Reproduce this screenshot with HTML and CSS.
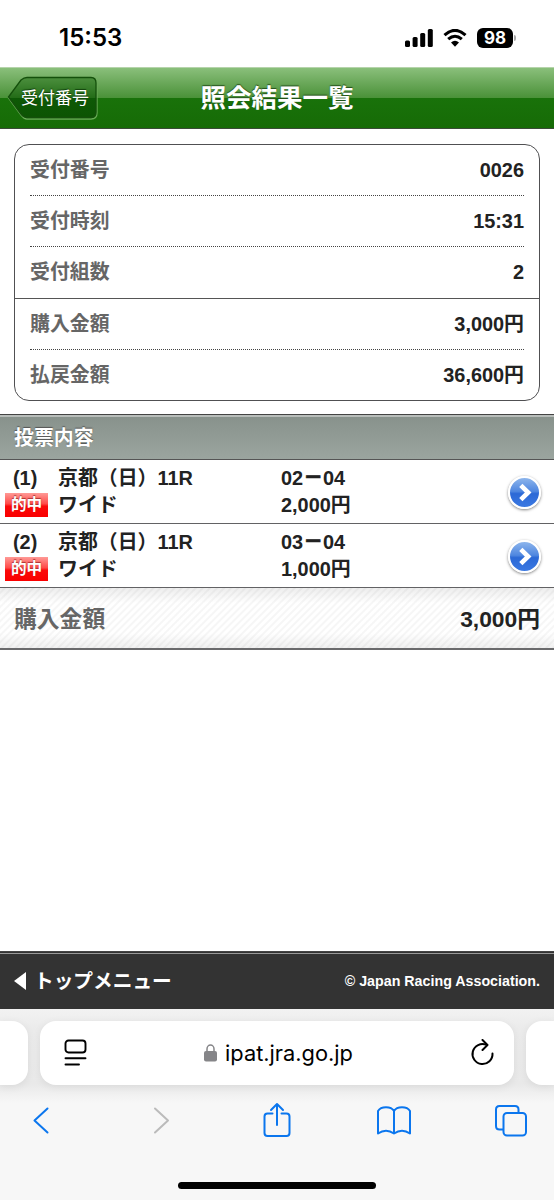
FILE: index.html
```html
<!DOCTYPE html>
<html lang="ja">
<head>
<meta charset="utf-8">
<title>照会結果一覧</title>
<link rel="stylesheet" href="styles.css">
</head>
<body>
<div class="status">
  <span class="time">15:53</span>
  <div class="indicators">
    <svg class="signal" width="28" height="18" viewBox="0 0 28 18"><rect x="0" y="11.5" width="5" height="6.5" rx="1.5"/><rect x="7.6" y="8" width="5" height="10" rx="1.5"/><rect x="15.2" y="4" width="5" height="14" rx="1.5"/><rect x="22.8" y="0" width="5" height="18" rx="1.5"/></svg>
    <svg class="wifi" width="24" height="18" viewBox="0 0 24 18"><path d="M1.5 6.2 Q12-3.4 22.5 6.2M5.2 10.2 Q12 4.3 18.8 10.2" fill="none" stroke="#000" stroke-width="3.1"/><path d="M8 13.4 Q12 10.3 16 13.4 L12 17.7Z"/></svg>
    <span class="battery">98</span><span class="battery-tip"></span>
  </div>
</div>
<header class="header">
  <a class="back">
    <svg class="back-shape" width="92" height="46" viewBox="0 0 92 46">
      <defs><linearGradient id="bg" x1="0" y1="0" x2="0" y2="1"><stop offset="0" stop-color="#4c8f3e"/><stop offset=".5" stop-color="#246d18"/><stop offset=".51" stop-color="#0e5906"/><stop offset="1" stop-color="#0c5403"/></linearGradient></defs>
      <path d="M1.5 22 L14 5 Q17 2.5 20 2.5 H84 Q90 2.5 90 8.5 V37 Q90 43 84 43 H20 Q17 43 14 39Z" fill="none" stroke="#6aab58" stroke-width="1.3"/>
      <path d="M1.5 21 L14 4 Q17 1.5 20 1.5 H84 Q89 1.5 89 7 V36 Q89 41.5 84 41.5 H20 Q17 41.5 14 38Z" fill="url(#bg)" stroke="#14500b" stroke-width="1.3"/>
    </svg>
    <span class="back-label">受付番号</span>
  </a>
  <h1 class="title">照会結果一覧</h1>
</header>
<main class="main">
  <dl class="card">
    <div class="row"><dt>受付番号</dt><dd>0026</dd></div>
    <div class="row"><dt>受付時刻</dt><dd>15:31</dd></div>
    <div class="row last"><dt>受付組数</dt><dd>2</dd></div>
    <div class="row split"><dt>購入金額</dt><dd>3,000円</dd></div>
    <div class="row last"><dt>払戻金額</dt><dd>36,600円</dd></div>
  </dl>
  <h2 class="section">投票内容</h2>
  <div class="bet">
    <div class="mark"><span class="num">(1)</span><span class="hit">的中</span></div>
    <div class="race"><span>京都（日）11R</span><span>ワイド</span></div>
    <div class="stake"><span>02<b class="dash">－</b>04</span><span>2,000円</span></div>
    <span class="go"><svg width="29" height="29" viewBox="0 0 30 30"><path d="M11.2 7.6 L18.8 15 L11.2 22.4" fill="none" stroke="#fff" stroke-width="4.8"/></svg></span>
  </div>
  <div class="bet">
    <div class="mark"><span class="num">(2)</span><span class="hit">的中</span></div>
    <div class="race"><span>京都（日）11R</span><span>ワイド</span></div>
    <div class="stake"><span>03<b class="dash">－</b>04</span><span>1,000円</span></div>
    <span class="go"><svg width="29" height="29" viewBox="0 0 30 30"><path d="M11.2 7.6 L18.8 15 L11.2 22.4" fill="none" stroke="#fff" stroke-width="4.8"/></svg></span>
  </div>
  <div class="total"><span class="total-label">購入金額</span><span>3,000円</span></div>
</main>
<footer class="footer">
  <a class="top-menu"><svg width="12" height="18" viewBox="0 0 12 18"><path d="M0 9 L12 0 V18Z" fill="#fff"/></svg><span>トップメニュー</span></a>
  <small class="copy">© Japan Racing Association.</small>
</footer>
<div class="browser">
  <div class="tabs">
    <div class="tab side-left"></div>
    <div class="tab address">
      <svg width="24" height="28" viewBox="0 0 24 28" fill="none" stroke="#000" stroke-width="1.9" stroke-linecap="round"><rect x="2.5" y="1.5" width="20" height="12" rx="3"/><path d="M2.5 19.3H22.5M2.5 25.5H16"/></svg>
      <div class="url"><svg width="13" height="18" viewBox="0 0 13 18"><rect y="7" width="13" height="10.5" rx="2" fill="#858588"/><path d="M3 8V5a3.5 3.9 0 0 1 7 0v3" fill="none" stroke="#858588" stroke-width="1.5"/></svg><span>ipat.jra.go.jp</span></div>
      <svg width="24" height="28" viewBox="0 0 24 28" fill="none" stroke="#000" stroke-width="2" stroke-linecap="round" stroke-linejoin="round"><path d="M22.5 14.5A10 10 0 1 1 16.5 5.9"/><path d="M12.5 1 L17.5 6 L12.5 11"/></svg>
    </div>
    <div class="tab side-right"></div>
  </div>
  <nav class="tools">
    <svg width="34" height="36" viewBox="0 0 34 36"><path d="M23.5 6.5 L10.5 18.5 L23.5 30.5"/></svg>
    <svg class="disabled" width="34" height="36" viewBox="0 0 34 36"><path d="M13 6.5 L26 18.5 L13 30.5"/></svg>
    <svg width="34" height="36" viewBox="0 0 34 36"><path d="M13.5 11.5H8.5Q5.5 11.5 5.5 14.5V31Q5.5 34 8.5 34H27.5Q30.5 34 30.5 31V14.5Q30.5 11.5 27.5 11.5H22.5M18 23V2M12 8L18 2L24 8"/></svg>
    <svg width="34" height="36" viewBox="0 0 34 36"><path d="M17 9C14 4 4 4 1 9V31.5Q9 26 17 31.5Q25 26 33 31.5V9C30 4 20 4 17 9V31.5"/></svg>
    <svg width="34" height="36" viewBox="0 0 34 36"><path d="M9 27.5H5.5Q2 27.5 2 24V7.5Q2 4 5.5 4H21Q24.5 4 24.5 7.5V11"/><rect x="9.5" y="11" width="22.5" height="22.5" rx="3.5"/></svg>
  </nav>
  <div class="home"></div>
</div>
</body>
</html>
```
FILE: styles.css
```css
* { box-sizing: border-box; }
body {
  margin: 0;
  width: 554px;
  height: 1200px;
  overflow: hidden;
  display: flex;
  flex-direction: column;
  background: #fff;
  color: #222;
  font: bold 19.9px/26px "Liberation Sans", "Noto Sans CJK JP", sans-serif;
  white-space: nowrap;
}
svg { display: block; flex: none; }

.status {
  height: 67px;
  flex: none;
  padding: 8px 38px 0 59px;
  display: flex;
  justify-content: space-between;
  align-items: center;
  color: #000;
}
.time { font: 600 24px/28px Inter, sans-serif; }
.indicators { display: flex; align-items: center; }
.wifi { margin: 0 10px; }
.battery {
  width: 36px;
  height: 20px;
  border-radius: 6px;
  background: #000;
  color: #fff;
  font: 700 17px/20px Inter, sans-serif;
  text-align: center;
}
.battery-tip { width: 2px; height: 6px; margin-left: 1px; border-radius: 0 2px 2px 0; background: #aaa; }

.header {
  height: 62px;
  flex: none;
  position: relative;
  display: flex;
  justify-content: center;
  align-items: center;
  border-top: 1px solid #b6d4ab;
  border-bottom: 1px solid #3b4a38;
  background: linear-gradient(#8abf7b 0, #4a9138 50%, #19720a 50%, #166b06 100%);
  color: #fff;
}
.title { margin: 0; font-size: 25.5px; line-height: 38px; text-shadow: 0 -1px 1px #234f1b; }
.back { position: absolute; left: 7px; top: 8px; width: 92px; height: 46px; }
.back-label { position: absolute; left: 14px; top: 10px; font-size: 17px; line-height: 26px; font-weight: 400; text-shadow: 0 -1px 1px #123f0c; }

.main { height: 822px; flex: none; }
.card {
  margin: 15px 14px 13px;
  height: 257px;
  border: 1.5px solid #505052;
  border-radius: 15px;
  display: grid;
  grid-template-rows: 51px 51px 51px 52px 50px;
}
.row {
  margin: 0 15px;
  padding-bottom: 1px;
  display: flex;
  justify-content: space-between;
  align-items: center;
  border-bottom: 1px dotted #444;
}
.row.last { border-bottom: 0; padding-bottom: 1px; }
.row.split { margin: 0; padding: 0 15px 2px; position: relative; border-top: 1px solid #555; border-bottom: 0; }
.row.split::after { content: ""; position: absolute; left: 15px; right: 15px; bottom: 0; border-bottom: 1px dotted #444; }
dt { color: #666; }
dd { margin: 0; }

.section {
  margin: 0;
  height: 46px;
  padding-left: 14px;
  border-top: 1px solid #444;
  border-bottom: 1px solid #555;
  box-shadow: inset 0 2px #b8bdba;
  background: linear-gradient(#87918b, #9ba59f);
  color: #fff;
  font-size: 19.9px;
  line-height: 46px;
  text-shadow: 0 -1px 1px #555;
}
.bet {
  height: 64px;
  display: grid;
  grid-template-columns: 53px 223px 227px 33px;
  padding: 5px 0 0 5px;
  border-bottom: 1px solid #626264;
}
.mark, .race, .stake { display: flex; flex-direction: column; line-height: 27px; }
.num { padding-left: 8px; }
.dash { -webkit-text-stroke: 0.6px #222; }
.hit {
  width: 43px;
  height: 24px;
  margin-top: 1px;
  background: linear-gradient(#ff9a96 0, #ff4a48 45%, #fa0a0a 55%, #fa0000 100%);
  color: #fff;
  font-size: 15.6px;
  line-height: 24px;
  text-align: center;
  text-shadow: 0 -1px 1px #a33;
}
.go {
  width: 33px;
  height: 33px;
  margin-top: 11px;
  border: 2px solid #fff;
  border-radius: 50%;
  background: linear-gradient(#8db5ec, #4f87e0 46%, #2c69d6 54%, #3a78e2);
  box-shadow: 0 1px 3px rgba(0, 0, 0, .5);
}
.total {
  height: 62px;
  padding: 2px 14px 0;
  display: flex;
  justify-content: space-between;
  align-items: center;
  border-bottom: 2px solid #6a6a6c;
  background:
    linear-gradient(rgba(0, 0, 0, .07), transparent 25%, transparent 75%, rgba(0, 0, 0, .06)),
    repeating-linear-gradient(135deg, #fff 0 2px, #f6f6f6 3px 4px, #fff 5px);
  font-size: 22.8px;
}
.total-label { color: #666; }

.footer {
  height: 58px;
  flex: none;
  padding: 0 14px;
  display: flex;
  justify-content: space-between;
  align-items: center;
  border-top: 1px solid #444;
  box-shadow: inset 0 1px #333, inset 0 2px #999;
  background: #333;
  color: #fff;
}
.top-menu { display: flex; align-items: center; gap: 8px; font-size: 19.7px; }
.copy { font-size: 14.25px; }

.browser {
  height: 191px;
  flex: none;
  background: linear-gradient(#f2f2f2 0, #ebebeb 20px, #e9e9e9 75px, #f7f7f7 94px);
  color: #000;
}
.tabs { display: flex; gap: 12px; padding-top: 12px; }
.tab { height: 64px; border-radius: 16px; background: #fff; box-shadow: 0 2px 9px rgba(0, 0, 0, .07); }
.side-left { width: 28px; border-radius: 0 16px 16px 0; }
.side-right { width: 28px; border-radius: 16px 0 0 16px; }
.address { width: 474px; padding: 0 20px 0 23px; display: flex; justify-content: space-between; align-items: center; }
.url { display: flex; align-items: center; gap: 8px; font: 400 21.8px/28px Inter, sans-serif; }
.tools { display: flex; justify-content: space-between; padding: 17px 26px 0 24px; }
.tools svg { fill: none; stroke: #0b76ee; stroke-width: 2; stroke-linecap: round; stroke-linejoin: round; }
.tools .disabled { stroke: #bbb; }
.home { width: 198px; height: 7px; margin: 44px auto 0; border-radius: 4px; background: #000; }
```
